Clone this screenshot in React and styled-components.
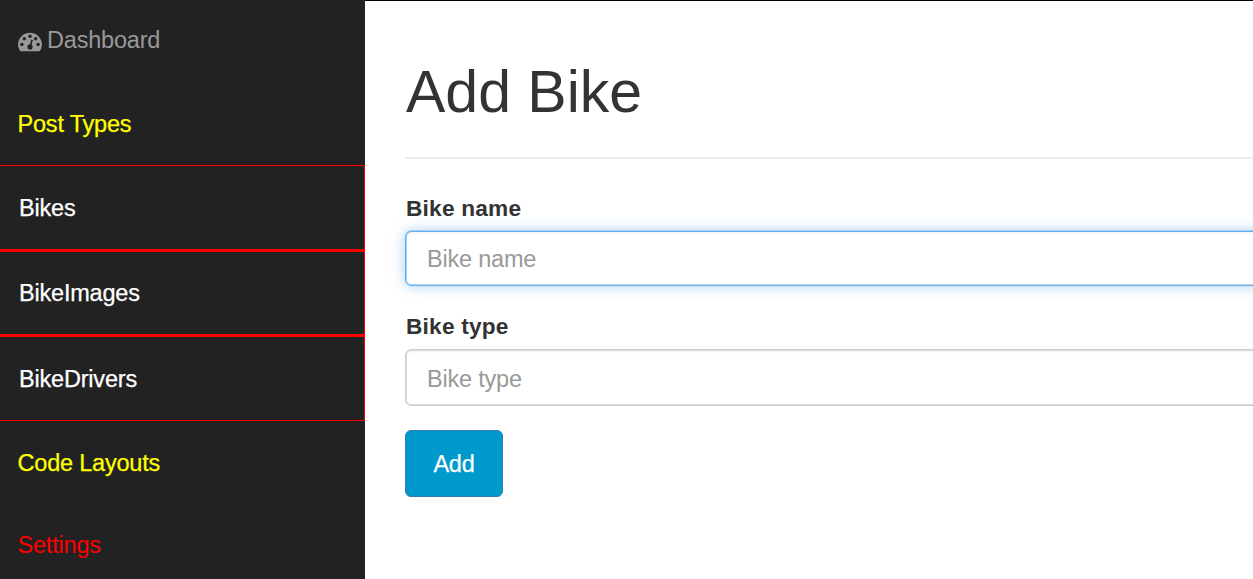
import React from "react";
import styled, { createGlobalStyle } from "styled-components";

const GlobalStyle = createGlobalStyle`
  * { box-sizing: border-box; }
  body {
    margin: 0;
    overflow: hidden;
    background: #fff;
    color: #333;
    font-family: "Liberation Sans", Arial, sans-serif;
    font-size: 23.5px;
    letter-spacing: -0.2px;
    line-height: 33px;
  }
`;

const Page = styled.div`
  display: flex;
  height: 579px;
  width: 1253px;
  overflow: hidden;
`;

const Sidebar = styled.nav`
  flex: 0 0 365px;
  background: #222;
`;

const NavItem = styled.a`
  display: flex;
  align-items: center;
  height: ${(p) => p.$height}px;
  padding: ${(p) => p.$drop || 0}px 0 0 17.5px;
  color: ${(p) => p.$color};
  -webkit-text-stroke: ${(p) => (p.$heavy ? 0.25 : 0)}px currentColor;
`;

const SubItem = styled.a`
  display: flex;
  align-items: center;
  height: ${(p) => p.$height}px;
  padding: ${(p) => p.$drop || 0}px 0 0 19px;
  color: #fff;
  -webkit-text-stroke: 0.25px currentColor;
  border-style: solid;
  border-color: #f00;
  border-width: ${(p) => p.$top}px 1px ${(p) => p.$bottom}px 0;
`;

const GaugeIcon = styled.svg`
  width: 24px;
  height: 20px;
  margin: 3px 5.5px 0 0;
  flex: none;
`;

const Main = styled.main`
  flex: 1;
  border-top: 1px solid #000;
  padding-left: 40px;
`;

const Title = styled.h1`
  margin: 58px 0 0 1px;
  font-size: 59px;
  font-weight: 400;
  letter-spacing: 0;
  line-height: 66px;
`;

const Divider = styled.hr`
  height: 2px;
  margin: 32px 0 0;
  border: 0;
  background: #eee;
`;

const Label = styled.label`
  display: block;
  height: 33px;
  margin-top: ${(p) => p.$gap}px;
  padding-left: 1px;
  font-size: 22.7px;
  font-weight: 700;
  letter-spacing: 0.2px;
`;

const Field = styled.input`
  display: block;
  width: 900px;
  height: ${(p) => p.$height}px;
  margin-top: ${(p) => p.$gap}px;
  padding: ${(p) => p.$drop}px 20px 0 21px;
  border: 1px solid ${(p) => (p.$active ? "#66afe9" : "#ccc")};
  border-radius: 6px;
  outline: 0;
  background: #fff;
  font: inherit;
  letter-spacing: inherit;
  box-shadow: ${(p) =>
    p.$active
      ? "inset 0 2px 2px rgba(0,0,0,.04), inset 1px 0 0 #a9d0f0, inset 0 -1px 0 #b2d7f4, 0 -1px 0 #a9d0f0, 0 0 13px rgba(102,175,233,.6)"
      : "inset 1px 0 0 #ddd, inset 0 1px 0 #ddd, inset 0 2px 2px rgba(0,0,0,.06), inset 0 -1px 0 #ddd"};
  &::placeholder { color: #999; opacity: 1; }
`;

const Submit = styled.button`
  display: block;
  width: 98px;
  height: 67px;
  margin-top: 24px;
  padding: 2px 0 0;
  border: 1px solid #337ab7;
  border-radius: 6px;
  background: #09c;
  color: #fff;
  font: inherit;
  letter-spacing: inherit;
  -webkit-text-stroke: 0.25px currentColor;
`;

export default function App() {
  return (
    <>
      <GlobalStyle />
      <Page>
        <Sidebar>
          <NavItem $height={81} $color="#999">
            <GaugeIcon viewBox="0 0 24 20">
              <path
                fill="#999"
                d="M12 .7A11.7 11.7 0 0 0 2 18.7q.3.6.9.6h18.2q.6 0 .9-.6A11.7 11.7 0 0 0 12 .7z"
              />
              <g fill="#222">
                <circle cx="3.9" cy="12.4" r="1.7" />
                <circle cx="6.3" cy="6.7" r="1.7" />
                <circle cx="12" cy="4.2" r="1.7" />
                <circle cx="17.7" cy="6.7" r="1.7" />
                <circle cx="20.1" cy="12.4" r="1.7" />
                <circle cx="12" cy="14.9" r="2.6" />
                <path d="M13.3 7.6l1.6.4-1.9 6.8-1.7-.4z" />
              </g>
            </GaugeIcon>
            Dashboard
          </NavItem>
          <NavItem $height={84} $drop={2} $heavy $color="#ff0">Post Types</NavItem>
          <SubItem $height={85} $drop={2} $top={1} $bottom={1}>Bikes</SubItem>
          <SubItem $height={85} $top={2} $bottom={1}>BikeImages</SubItem>
          <SubItem $height={86} $drop={2} $top={2} $bottom={1}>BikeDrivers</SubItem>
          <NavItem $height={83} $drop={2} $heavy $color="#ff0">Code Layouts</NavItem>
          <NavItem $height={75} $drop={7} $color="#f00">Settings</NavItem>
        </Sidebar>
        <Main>
          <Title>Add Bike</Title>
          <Divider />
          <Label $gap={33} htmlFor="bike-name">Bike name</Label>
          <Field $height={55} $gap={6} $drop={2} $active id="bike-name" placeholder="Bike name" />
          <Label $gap={24} htmlFor="bike-type">Bike type</Label>
          <Field $height={57} $gap={6} $drop={3} id="bike-type" placeholder="Bike type" />
          <Submit type="button">Add</Submit>
        </Main>
      </Page>
    </>
  );
}
